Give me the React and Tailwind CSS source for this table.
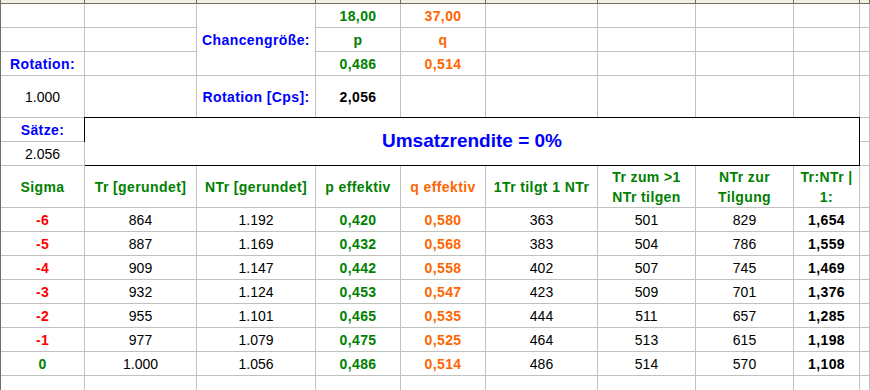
import React from 'react';

const cols = 'grid-cols-[84px_112px_119px_85px_85px_112px_98px_98px_66px_1fr]';

const GREEN = 'text-[#008000]';
const ORANGE = 'text-[#ff6600]';
const BLUE = 'text-[#0000ff]';
const RED = 'text-[#ff0000]';

const rows = [
  ['-6', '864', '1.192', '0,420', '0,580', '363', '501', '829', '1,654'],
  ['-5', '887', '1.169', '0,432', '0,568', '383', '504', '786', '1,559'],
  ['-4', '909', '1.147', '0,442', '0,558', '402', '507', '745', '1,469'],
  ['-3', '932', '1.124', '0,453', '0,547', '423', '509', '701', '1,376'],
  ['-2', '955', '1.101', '0,465', '0,535', '444', '511', '657', '1,285'],
  ['-1', '977', '1.079', '0,475', '0,525', '464', '513', '615', '1,198'],
  ['0', '1.000', '1.056', '0,486', '0,514', '486', '514', '570', '1,108'],
];

// eine Zelle mit Gitterlinie rechts und unten
function Cell({ children, className = '', bold = false }) {
  return (
    <div
      className={`flex items-center justify-center text-center border-r border-b border-[#c0c0c0] text-[14px] leading-[20px] whitespace-nowrap overflow-hidden ${
        bold ? 'font-bold tracking-[0.4px]' : 'font-normal'
      } ${className}`}
    >
      {children}
    </div>
  );
}

export default function App() {
  return (
    <div
      className="w-[870px] h-[390px] overflow-hidden bg-white border-l border-[#716f64] text-black"
      style={{ fontFamily: '"Liberation Sans", Arial, sans-serif' }}
    >
      {/* Spaltenköpfe (abgeschnitten) */}
      <div className={`grid ${cols} h-[4px] bg-[#f1efe2] border-b border-[#716f64]`}>
        {Array.from({ length: 10 }).map((_, i) => (
          <div key={i} className="border-r border-[#716f64]" />
        ))}
      </div>

      <div
        className={`grid ${cols} grid-rows-[24px_24px_24px_42px_24px_24px_42px_repeat(8,24px)]`}
      >
        {/* Zeile 1 */}
        <Cell />
        <Cell />
        <Cell bold className={`row-span-3 ${BLUE}`}>Chancengröße:</Cell>
        <Cell bold className={GREEN}>18,00</Cell>
        <Cell bold className={ORANGE}>37,00</Cell>
        <Cell />
        <Cell />
        <Cell />
        <Cell />
        <Cell />

        {/* Zeile 2 */}
        <Cell />
        <Cell />
        <Cell bold className={GREEN}>p</Cell>
        <Cell bold className={ORANGE}>q</Cell>
        <Cell />
        <Cell />
        <Cell />
        <Cell />
        <Cell />

        {/* Zeile 3 */}
        <Cell bold className={BLUE}>Rotation:</Cell>
        <Cell />
        <Cell bold className={GREEN}>0,486</Cell>
        <Cell bold className={ORANGE}>0,514</Cell>
        <Cell />
        <Cell />
        <Cell />
        <Cell />
        <Cell />

        {/* Zeile 4 */}
        <Cell>1.000</Cell>
        <Cell />
        <Cell bold className={BLUE}>Rotation [Cps]:</Cell>
        <Cell bold>2,056</Cell>
        <Cell />
        <Cell />
        <Cell />
        <Cell />
        <Cell />
        <Cell />

        {/* Zeile 5 + 6 */}
        <Cell bold className={BLUE}>Sätze:</Cell>
        <div className="col-span-8 row-span-2 -mt-px -ml-px border border-black bg-white flex items-center justify-center">
          <span className={`text-[19px] font-bold ${BLUE}`}>Umsatzrendite = 0%</span>
        </div>
        <Cell />
        <Cell>2.056</Cell>
        <Cell />

        {/* Kopfzeile */}
        <Cell bold className={GREEN}>Sigma</Cell>
        <Cell bold className={GREEN}>Tr [gerundet]</Cell>
        <Cell bold className={GREEN}>NTr [gerundet]</Cell>
        <Cell bold className={GREEN}>p effektiv</Cell>
        <Cell bold className={ORANGE}>q effektiv</Cell>
        <Cell bold className={GREEN}>1Tr tilgt 1 NTr</Cell>
        <Cell bold className={GREEN}>
          Tr zum &gt;1
          <br />
          NTr tilgen
        </Cell>
        <Cell bold className={GREEN}>
          NTr zur
          <br />
          Tilgung
        </Cell>
        <Cell bold className={GREEN}>
          Tr:NTr |
          <br />
          1:
        </Cell>
        <Cell />

        {/* Daten */}
        {rows.map((r) => (
          <React.Fragment key={r[0]}>
            <Cell bold className={r[0] === '0' ? GREEN : RED}>{r[0]}</Cell>
            <Cell>{r[1]}</Cell>
            <Cell>{r[2]}</Cell>
            <Cell bold className={GREEN}>{r[3]}</Cell>
            <Cell bold className={ORANGE}>{r[4]}</Cell>
            <Cell>{r[5]}</Cell>
            <Cell>{r[6]}</Cell>
            <Cell>{r[7]}</Cell>
            <Cell bold>{r[8]}</Cell>
            <Cell />
          </React.Fragment>
        ))}

        {/* leere Zeile */}
        {Array.from({ length: 10 }).map((_, i) => (
          <Cell key={'e' + i} />
        ))}
      </div>
    </div>
  );
}
